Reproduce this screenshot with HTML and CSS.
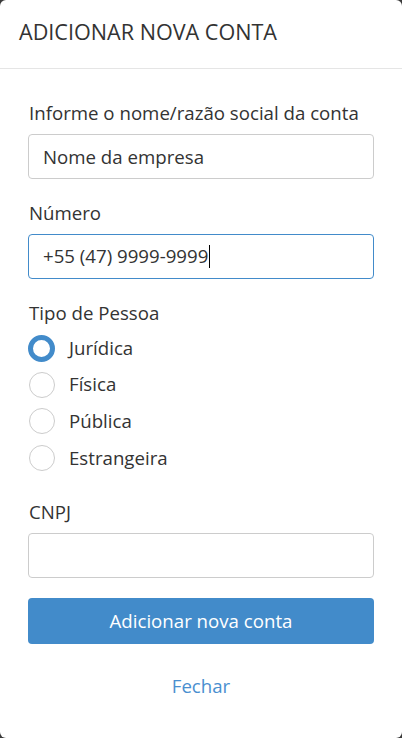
FILE: index.html
```html
<!DOCTYPE html>
<html lang="pt-BR">
<head>
    <meta charset="UTF-8">
    <meta name="viewport" content="width=device-width, initial-scale=1.0">
    <title>Adicionar nova conta</title>
    <link rel="stylesheet" href="styles.css">
</head>
<body>
    <div class="modal">
        <div class="modal-header">
            <h4 class="modal-title">ADICIONAR NOVA CONTA</h4>
        </div>

        <form class="modal-body">
            <div class="form-group">
                <label class="label" for="nome">Informe o nome/razão social da conta</label>
                <input class="input" id="nome" type="text" placeholder="Nome da empresa">
            </div>

            <div class="form-group">
                <label class="label" for="numero">Número</label>
                <div class="input input-focus">+55 (47) 9999-9999<span class="caret"></span></div>
            </div>

            <div class="form-group">
                <span class="label">Tipo de Pessoa</span>
                <div class="radios">
                    <label class="radio"><span class="dot dot-checked"></span>Jurídica</label>
                    <label class="radio"><span class="dot"></span>Física</label>
                    <label class="radio"><span class="dot"></span>Pública</label>
                    <label class="radio"><span class="dot"></span>Estrangeira</label>
                </div>
            </div>

            <div class="form-group cnpj">
                <label class="label" for="cnpj">CNPJ</label>
                <input class="input" id="cnpj" type="text">
            </div>

            <button type="button" class="btn-primary">Adicionar nova conta</button>
            <a class="close-link" href="#">Fechar</a>
        </form>
    </div>
</body>
</html>
```

FILE: styles.css
```css
* {
    box-sizing: border-box;
}

html, body {
    height: 100%;
}

body {
    margin: 0;
    background-color: #3a3a3a;
    font-family: "Open Sans", sans-serif;
    font-size: 18.67px;
    line-height: 26.67px;
    color: #333;
}

.modal {
    height: 100%;
    background-color: #fff;
    border-radius: 6px;
    overflow: hidden;
}

.modal-header {
    height: 69px;
    padding: 20px 19px 0 19px;
    border-bottom: 1px solid #e5e5e5;
}

.modal-title {
    margin: 0;
    font-size: 21.6px;
    line-height: 24px;
    font-weight: normal;
    color: #333;
}

.modal-body {
    padding: 31px 28px 0 28px;
    display: flex;
    flex-direction: column;
}

.form-group {
    display: flex;
    flex-direction: column;
    margin-bottom: 21px;
}

.label {
    margin-bottom: 7px;
    padding-left: 1px;
}

.input {
    height: 45.33px;
    width: 100%;
    padding: 0 14px;
    border: 1px solid #ccc;
    border-radius: 4px;
    font-family: inherit;
    font-size: 18.67px;
    color: #333;
    display: flex;
    align-items: center;
    outline: none;
}

.input::placeholder {
    color: #333;
}

.input-focus {
    border-color: #428bca;
}

.caret {
    display: inline-block;
    width: 1px;
    height: 23px;
    background-color: #000;
    margin-left: 1px;
}

.radios {
    display: flex;
    flex-direction: column;
    margin-top: -4px;
}

.radio {
    display: flex;
    align-items: center;
    height: 36.67px;
}

.dot {
    width: 26px;
    height: 26px;
    border: 1px solid #ccc;
    border-radius: 50%;
    margin-left: 1px;
    margin-right: 14px;
}

.dot-checked {
    width: 27px;
    height: 27px;
    margin-left: 0;
    border: 5px solid #428bca;
}

.cnpj {
    margin-top: 2px;
    margin-bottom: 20px;
}

.btn-primary {
    height: 45.33px;
    border: none;
    border-radius: 4px;
    background-color: #428bca;
    color: #fff;
    font-family: inherit;
    font-size: 18.67px;
    cursor: pointer;
}

.close-link {
    display: block;
    text-align: center;
    margin-top: 29.5px;
    color: #4a8fd0;
    text-decoration: none;
}
```
